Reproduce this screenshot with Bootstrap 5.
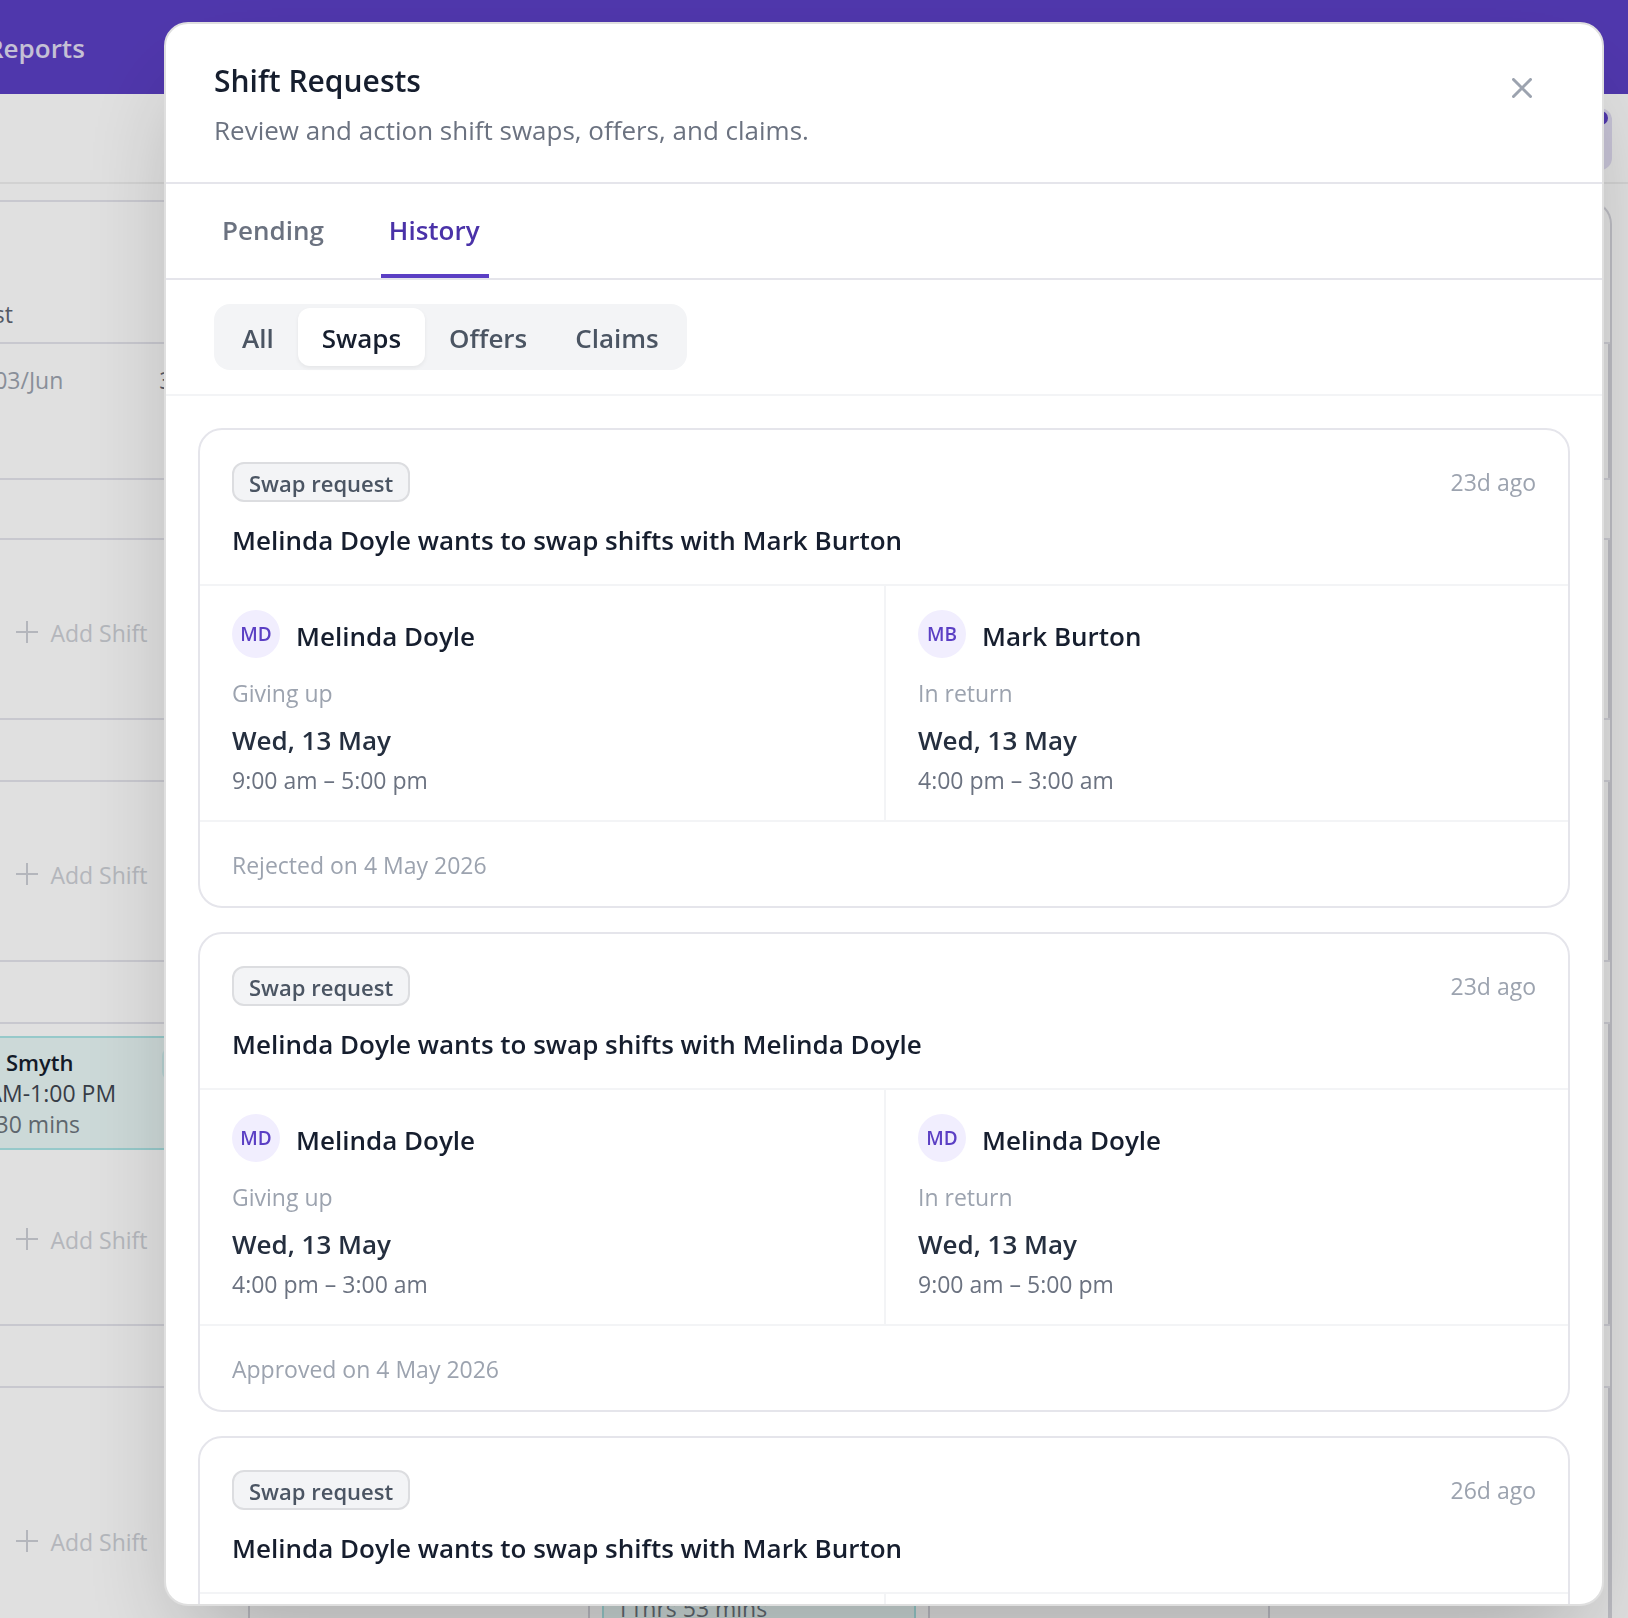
<!DOCTYPE html>
<html lang="en">
<head>
<meta charset="utf-8">
<meta name="viewport" content="width=device-width, initial-scale=1">
<title>Shift Requests</title>
<link href="https://cdn.jsdelivr.net/npm/bootstrap@5.3.0/dist/css/bootstrap.min.css" rel="stylesheet">
<style>
  :root { --brand: #5b3fc4; --line: #e5e5eb; --grid: #e4e4ec; --faint: #f3f4f6; --ink: #161e2e; --muted: #6b7280; --soft: #9ca3af; }
  body { font-family: "Open Sans", "Noto Sans", sans-serif; font-size: 26px; line-height: 40px; color: var(--ink); }
  .t-sm { font-size: 23px; line-height: 32px; }
  .fw-semi { font-weight: 600; }

  /* Rota page behind the dialog */
  .topbar { height: 94px; background: var(--brand); padding-top: 2px; }
  .topbar a { color: #e0dcf3; text-decoration: none; margin-left: -13px; }
  .toolbar { height: 90px; border-bottom: 2px solid #f0f0f0; padding: 14px 16px 0 0; }
  .bell { position: relative; width: 64px; height: 62px; border: 0; border-radius: 12px; background: #e2def3; }
  .bell-dot { position: absolute; top: 3px; right: 4px; width: 14px; height: 14px; border-radius: 50%; background: var(--brand); }
  .rota { margin: 16px 16px 0 -92px; border: 2px solid #d6d6dd; border-bottom: 0; border-top-color: var(--grid); border-radius: 24px 24px 0 0; flex: 1 1 0; min-height: 0; overflow: hidden; }
  .rota-row { display: grid; grid-template-columns: repeat(5, 1fr); border-bottom: 2px solid var(--grid); }
  .rota-row > div { border-right: 2px solid #d6d6dd; padding: 12px; min-width: 0; }
  .r-head { height: 142px; } .r-days { height: 136px; } .r-gap { height: 60px; } .r-gap2 { height: 62px; }
  .r-shift { height: 180px; } .r-tall { height: 302px; }
  .rota-row > .day-cell { padding: 20px 22px 20px 24px; }
  .add-shift { border: 0; background: none; color: #cdd0d6; width: 100%; padding: 8px 0 0 6px; display: flex; justify-content: center; align-items: center; gap: 12px; }
  .add-shift svg { margin-top: -3px; }
  .shift + .add-shift { padding-top: 68px; }
  .shift { border: 2px solid #abe5e6; background: #e9f7f6; height: 114px; padding: 9px 12px; font-size: 23px; line-height: 31px; margin-bottom: 6px; position: relative; white-space: nowrap; }
  .shift .fw-semi { font-size: 22px; }
  .shift-tag { position: absolute; right: 10px; top: 10px; width: 62px; height: 32px; border-radius: 8px; background: #cfeeee; }

  /* Dialog */
  .scrim { position: fixed; inset: 0; background: rgba(0,0,0,.12); padding: 22px 24px 12px 164px; }
  .dialog { height: 100%; border: 2px solid #dfdfdf; border-radius: 24px; box-shadow: 0 50px 100px -24px rgba(0,0,0,.25); overflow: hidden; background: #fff; color: var(--ink); }
  .dialog-head { padding: 33px 48px 32px; border-bottom: 2px solid var(--line); }
  .dialog-head h1 { font-size: 30px; line-height: 48px; margin: 0 0 5px; font-weight: 600; }
  .close-btn { border: 0; background: none; padding: 21px 22px; line-height: 0; }
  .tabs { padding: 0 48px; gap: 48px; border-bottom: 2px solid var(--line); }
  .tab { border: 0; border-bottom: 4px solid transparent; background: none; padding: 26px 9px 24px 8px; color: var(--muted); font-weight: 600; }
  .tab.active { color: #4a32a8; border-color: var(--brand); }
  .filters { padding: 24px 48px; border-bottom: 2px solid var(--faint); }
  .segment { background: var(--faint); border-radius: 16px; padding: 4px; }
  .segment button { border: 0; background: none; border-radius: 12px; padding: 10px 24px 8px; color: #4b5563; font-weight: 600; }
  .segment button.active { background: #fff; color: var(--ink); box-shadow: 0 2px 4px rgba(0,0,0,.06); }
  .requests { padding: 32px; overflow-y: auto; scrollbar-width: none; min-height: 0; gap: 24px; }
  .request { flex: none; border: 2px solid var(--line); border-radius: 24px; }
  .request-head { padding: 32px 32px 24px; border-bottom: 2px solid var(--faint); }
  .request-head h2 { font-size: 26px; line-height: 40px; margin: 18px 0 0; font-weight: 600; }
  .kind { border: 2px solid #dcdde0; border-radius: 12px; background: var(--faint); color: #4b5563; padding: 3px 15px 1px; font-size: 22px; line-height: 32px; font-weight: 600; }
  .soft { color: var(--soft); }
  .party { width: 50%; padding: 24px 32px; }
  .party + .party { border-left: 2px solid var(--faint); }
  .initials { width: 48px; height: 48px; border-radius: 50%; background: #f1eefe; color: var(--brand); font-size: 19px; font-weight: 600; display: flex; align-items: center; justify-content: center; }
  .party-name { font-weight: 600; padding-top: 3px; }
  .party-label { margin-top: 19px; }
  .party-day { color: #252f3f; font-weight: 600; margin: 11px 0 4px; }
  .request-foot { padding: 27px 32px 25px; border-top: 2px solid var(--faint); }
</style>
</head>
<body>
<div class="vh-100 overflow-hidden d-flex flex-column" aria-hidden="true">
  <nav class="topbar d-flex align-items-center flex-shrink-0"><a href="#" class="fw-semi">Reports</a></nav>
  <div class="toolbar d-flex justify-content-end flex-shrink-0"><button type="button" class="bell" tabindex="-1"><span class="bell-dot"></span></button></div>
  <div class="rota">
    <div class="rota-row r-head"><div class="t-sm d-flex align-items-end border-end-0" style="color:#5f6673">Forecast</div></div>
    <div class="rota-row r-days"><div class="day-cell t-sm soft d-flex justify-content-between"><span>Wed, 03/Jun</span><span style="color:#5f6673">38 hrs</span></div><div></div><div></div><div></div><div></div></div>
    <div class="rota-row r-gap"></div>
    <div class="rota-row r-shift"><div class="d-flex"><button type="button" tabindex="-1" class="add-shift t-sm"><svg width="22" height="22" viewBox="0 0 22 22" stroke="currentColor" stroke-width="2" fill="none"><path d="M11 0v22M0 11h22"/></svg>Add Shift</button></div><div></div><div></div><div></div><div></div></div>
    <div class="rota-row r-gap2"></div>
    <div class="rota-row r-shift"><div class="d-flex"><button type="button" tabindex="-1" class="add-shift t-sm"><svg width="22" height="22" viewBox="0 0 22 22" stroke="currentColor" stroke-width="2" fill="none"><path d="M11 0v22M0 11h22"/></svg>Add Shift</button></div><div></div><div></div><div></div><div></div></div>
    <div class="rota-row r-gap2"></div>
    <div class="rota-row r-tall"><div><div class="shift"><div class="fw-semi">Aaron Smyth</div><div style="color:#3f4651">9:30 AM-1:00 PM</div><div class="text-secondary">3 hrs 30 mins</div><span class="shift-tag"></span></div><button type="button" tabindex="-1" class="add-shift t-sm"><svg width="22" height="22" viewBox="0 0 22 22" stroke="currentColor" stroke-width="2" fill="none"><path d="M11 0v22M0 11h22"/></svg>Add Shift</button></div><div></div><div></div><div></div><div></div></div>
    <div class="rota-row r-gap2"></div>
    <div class="rota-row r-tall"><div class="d-flex"><button type="button" tabindex="-1" class="add-shift t-sm"><svg width="22" height="22" viewBox="0 0 22 22" stroke="currentColor" stroke-width="2" fill="none"><path d="M11 0v22M0 11h22"/></svg>Add Shift</button></div><div></div>
      <div><div class="shift"></div><div class="shift"><div class="fw-semi">Mark Burton</div><div>4:00 PM-3:53 AM</div><div class="text-secondary">11hrs 53 mins</div></div></div><div></div><div></div></div>
  </div>
</div>

<div class="scrim">
  <div class="dialog d-flex flex-column" role="dialog" aria-modal="true" aria-labelledby="dlg-title">
    <header class="dialog-head d-flex justify-content-between align-items-start">
      <div>
        <h1 id="dlg-title">Shift Requests</h1>
        <p class="mb-0" style="color:var(--muted)">Review and action shift swaps, offers, and claims.</p>
      </div>
      <button type="button" class="close-btn" aria-label="Close"><svg width="20" height="20" viewBox="0 0 20 20" fill="none" stroke="#9ca3af" stroke-width="3" stroke-linecap="round"><path d="M1.5 1.5l17 17M18.5 1.5l-17 17"/></svg></button>
    </header>
    <div class="tabs d-flex" role="tablist">
      <button type="button" class="tab" role="tab">Pending</button>
      <button type="button" class="tab active" role="tab" aria-selected="true">History</button>
    </div>
    <div class="filters d-flex">
      <div class="segment d-flex">
        <button type="button">All</button><button type="button" class="active">Swaps</button><button type="button">Offers</button><button type="button">Claims</button>
      </div>
    </div>
    <main class="requests d-flex flex-column">
      <article class="request">
        <div class="request-head">
          <div class="d-flex justify-content-between align-items-center"><span class="kind">Swap request</span><span class="soft t-sm">23d ago</span></div>
          <h2>Melinda Doyle wants to swap shifts with Mark Burton</h2>
        </div>
        <div class="d-flex">
          <section class="party">
            <div class="d-flex align-items-center gap-3"><span class="initials">MD</span><span class="party-name">Melinda Doyle</span></div>
            <div class="t-sm soft party-label">Giving up</div>
            <div class="party-day">Wed, 13 May</div>
            <div class="t-sm" style="color:var(--muted)">9:00 am – 5:00 pm</div>
          </section>
          <section class="party">
            <div class="d-flex align-items-center gap-3"><span class="initials">MB</span><span class="party-name">Mark Burton</span></div>
            <div class="t-sm soft party-label">In return</div>
            <div class="party-day">Wed, 13 May</div>
            <div class="t-sm" style="color:var(--muted)">4:00 pm – 3:00 am</div>
          </section>
        </div>
        <div class="request-foot t-sm soft">Rejected on 4 May 2026</div>
      </article>
      <article class="request">
        <div class="request-head">
          <div class="d-flex justify-content-between align-items-center"><span class="kind">Swap request</span><span class="soft t-sm">23d ago</span></div>
          <h2>Melinda Doyle wants to swap shifts with Melinda Doyle</h2>
        </div>
        <div class="d-flex">
          <section class="party">
            <div class="d-flex align-items-center gap-3"><span class="initials">MD</span><span class="party-name">Melinda Doyle</span></div>
            <div class="t-sm soft party-label">Giving up</div>
            <div class="party-day">Wed, 13 May</div>
            <div class="t-sm" style="color:var(--muted)">4:00 pm – 3:00 am</div>
          </section>
          <section class="party">
            <div class="d-flex align-items-center gap-3"><span class="initials">MD</span><span class="party-name">Melinda Doyle</span></div>
            <div class="t-sm soft party-label">In return</div>
            <div class="party-day">Wed, 13 May</div>
            <div class="t-sm" style="color:var(--muted)">9:00 am – 5:00 pm</div>
          </section>
        </div>
        <div class="request-foot t-sm soft">Approved on 4 May 2026</div>
      </article>
      <article class="request">
        <div class="request-head">
          <div class="d-flex justify-content-between align-items-center"><span class="kind">Swap request</span><span class="soft t-sm">26d ago</span></div>
          <h2>Melinda Doyle wants to swap shifts with Mark Burton</h2>
        </div>
        <div class="d-flex">
          <section class="party"></section>
          <section class="party"></section>
        </div>
      </article>
    </main>
  </div>
</div>
<script src="https://cdn.jsdelivr.net/npm/bootstrap@5.3.0/dist/js/bootstrap.bundle.min.js"></script>
</body>
</html>
